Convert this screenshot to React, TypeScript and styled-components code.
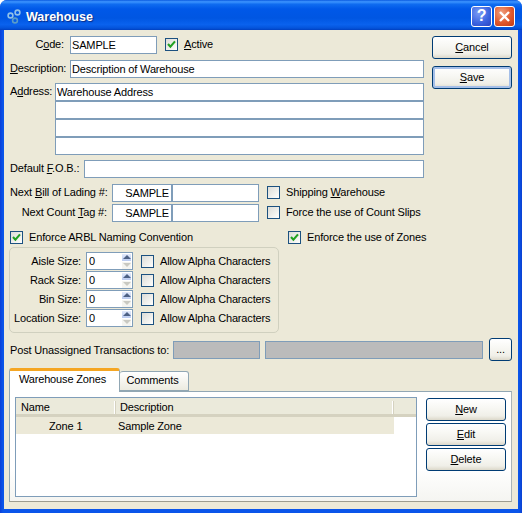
import React from "react";
import styled, { createGlobalStyle } from "styled-components";

const Global = createGlobalStyle`
  html, body { margin: 0; padding: 0; background: #fff; }
  body { font-family: "Liberation Sans", Arial, sans-serif; font-size: 11px; letter-spacing: -0.15px; color: #000; }
  * { box-sizing: border-box; }
  input, button { letter-spacing: inherit; }
`;

const Win = styled.div`
  width: 522px; height: 513px; display: flex; flex-direction: column;
  overflow: hidden; border-radius: 7px 7px 0 0;
  background: linear-gradient(90deg, #0a3fd8 0, #0a55ea 3px, #0a55ea 519px, #0a3fd0 100%);
`;
const TitleBar = styled.div`
  height: 30px; flex: none; display: flex; align-items: center; padding: 0 7px 0 7px;
  background: linear-gradient(180deg, #0a5ae0 0%, #3d95ff 6%, #0f6cf0 14%, #0058e8 30%, #0056e2 60%, #0a62ee 82%, #0453da 94%, #003fc0 100%);
`;
const TitleText = styled.span`
  font-weight: bold; font-size: 12.5px; letter-spacing: 0; color: #fff; margin-left: 5px; margin-top: 3px;
  text-shadow: 1px 1px 1px #0a2a80;
`;
const TitleIcon = styled.svg` width: 14px; height: 15px; flex: none; margin-top: 2px; `;
const TitleSpacer = styled.div` flex: 1; `;
const CapBtn = styled.div<{ $kind: "help" | "close" }>`
  width: 21px; height: 21px; border: 1px solid #fff; border-radius: 3px; margin-left: 2px; margin-top: 2px;
  display: flex; align-items: center; justify-content: center;
  color: #fff; font-weight: bold; font-size: 16px;
  background: ${p => p.$kind === "help"
    ? "radial-gradient(circle at 35% 30%, #7b9cf5 0%, #3a62df 60%, #2a44c0 100%)"
    : "radial-gradient(circle at 35% 30%, #f0a080 0%, #e0582c 55%, #c23a14 100%)"};
`;
const Body = styled.div`
  flex: 1; margin: 0 4px 4px; background: #ece9d8; padding-top: 6px; display: flex; flex-direction: column;
`;
const Top = styled.div` display: flex; `;
const FormCol = styled.div` width: 420px; display: flex; flex-direction: column; padding-left: 6px; `;
const SideCol = styled.div` margin-left: 8px; width: 80px; display: flex; flex-direction: column; gap: 7px; `;
const Row = styled.div<{ $mt?: number }>`
  display: flex; align-items: flex-start; margin-top: ${p => p.$mt ?? 0}px;
`;
const Label = styled.label<{ $w: number; $gap?: number }>`
  width: ${p => p.$w}px; flex: none; text-align: right;
  margin-right: ${p => p.$gap ?? 6}px; line-height: 16px; white-space: nowrap;
`;
const Field = styled.input<{ $w?: number; $right?: boolean; $gray?: boolean; $ml?: number }>`
  display: block; height: 18px; border: 1px solid #7f9db9; border-radius: 0; outline: none; padding: 0 2px 1px 1px;
  width: ${p => p.$w ? `${p.$w}px` : "100%"}; flex: ${p => p.$w ? "none" : "1 1 auto"};
  min-width: 0; margin: 0 0 0 ${p => p.$ml ?? 0}px;
  font: inherit; color: #000; text-align: ${p => p.$right ? "right" : "left"};
  background: ${p => p.$gray ? "#bbb" : "#fff"};
`;
const AddressStack = styled.div`
  flex: 1; display: flex; flex-direction: column;
  & > input { flex: none; }
`;
const Box = styled.span`
  width: 13px; height: 13px; flex: none; border: 1px solid #1c5180; display: block;
  background: linear-gradient(135deg, #dcdcd7 0%, #f4f4f1 70%, #fff 100%);
`;
const CheckWrap = styled.label<{ $ml?: number; $mt?: number }>`
  display: inline-flex; align-items: center; gap: 6px; white-space: nowrap; line-height: 13px;
  margin-left: ${p => p.$ml ?? 0}px; margin-top: ${p => p.$mt ?? 0}px;
`;
const Check = ({ on, children, ml, mt }: { on?: boolean; children: React.ReactNode; ml?: number; mt?: number }) => (
  <CheckWrap $ml={ml} $mt={mt}>
    <Box>
      {on && (
        <svg width="11" height="11" viewBox="0 0 11 11" style={{ display: "block" }}>
          <path d="M2 5 L4.4 7.6 L9 2.4" fill="none" stroke="#21a121" strokeWidth="2.1" />
        </svg>
      )}
    </Box>
    <span>{children}</span>
  </CheckWrap>
);
const Btn = styled.button<{ $default?: boolean; $w?: number }>`
  width: ${p => p.$w ?? 80}px; height: 23px; padding: 0 0 1px; border: 1px solid #003c74; border-radius: 3px;
  font: inherit; color: #000; flex: none;
  background: linear-gradient(180deg, #fff 0%, #f8f8f4 40%, #f0efe8 80%, #dcd8ca 100%);
  box-shadow: ${p => p.$default ? "inset 0 0 0 2px #a5bfe8" : "none"};
`;
const EnforceRow = styled.div`
  display: grid; grid-template-columns: 278px auto; padding-left: 6px; margin-top: 9px; height: 13px;
`;
const Group = styled.div`
  width: 270px; margin: 3px 0 0 5px; padding: 4px 0 5px; border: 1px solid #d0d0bf; border-radius: 5px;
  display: flex; flex-direction: column; gap: 1px;
`;
const SpinRow = styled.div` display: flex; align-items: center; height: 18px; `;
const SpinLabel = styled.span` width: 71px; text-align: right; margin-right: 5px; flex: none; white-space: nowrap; `;
const Spin = styled.div`
  width: 47px; height: 18px; border: 1px solid #7f9db9; background: #fff; display: flex; align-items: center; padding: 0 1px 0 2px; flex: none; margin-right: 8px;
`;
const SpinValue = styled.span` flex: 1; `;
const SpinBtns = styled.div` width: 9px; display: flex; flex-direction: column; gap: 1px; `;
const SpinUp = styled.div`
  height: 7px; background: linear-gradient(180deg, #e2eafb, #b9caf0); display: flex; align-items: center; justify-content: center;
  &::after { content: ""; border: 4px solid transparent; border-top: 0; border-bottom: 4px solid #4d6185; }
`;
const SpinDown = styled.div`
  height: 7px; background: #f4f4f0; display: flex; align-items: center; justify-content: center;
  &::after { content: ""; border: 4px solid transparent; border-bottom: 0; border-top: 4px solid #c9c9c2; }
`;
const PostRow = styled.div` display: flex; align-items: center; height: 23px; margin-top: 5px; padding-left: 6px; `;
const PostLabel = styled.span` width: 163px; flex: none; white-space: nowrap; `;
const MoreBtn = styled(Btn)` width: 23px; margin-left: 6px; `;
const Tabs = styled.div` display: flex; align-items: flex-end; margin: 7px 0 0 5px; height: 23px; `;
const Tab = styled.div<{ $active?: boolean }>`
  display: flex; align-items: center; justify-content: center; border: 1px solid #91a7b4; border-radius: 3px 3px 0 0;
  ${p => p.$active
    ? "width: 111px; height: 24px; margin-bottom: -1px; background: #fff; border-bottom: 0; border-top: 3px solid #f5a623; position: relative; z-index: 1; padding: 0 4px 5px 0;"
    : "width: 69px; height: 20px; border-left: 0; padding: 0 3px 2px 0; background: linear-gradient(180deg, #fff, #ecebe0);"}
`;
const Pane = styled.div`
  width: 503px; height: 111px; margin-left: 5px; border: 1px solid #91a7b4; border-right-color: #a9b4b8; border-bottom-color: #9c9c90;
  background: linear-gradient(180deg, #fff 0%, #fff 70%, #f5f5f1 100%);
  padding: 5px 5px 4px; display: flex;
`;
const List = styled.div` width: 402px; height: 100px; border: 1px solid #7f9db9; background: #fff; display: flex; flex-direction: column; `;
const ListHead = styled.div`
  height: 19px; flex: none; display: flex; align-items: center; padding-top: 3px; background: #ebeadb; border-bottom: 3px solid #d5d2c0;
`;
const HeadCell = styled.div<{ $w: number }>`
  width: ${p => p.$w}px; flex: none; padding-left: 5px; height: 13px; line-height: 13px;
  border-right: 1px solid #fff; box-shadow: 1px 0 0 #d5d2c0;
`;
const ListRow = styled.div` width: 378px; height: 17px; display: flex; align-items: center; background: #ece9d8; `;
const Cell = styled.div<{ $w?: number; $pl: number }>`
  width: ${p => p.$w ? `${p.$w}px` : "auto"}; flex: ${p => p.$w ? "none" : "1"}; padding-left: ${p => p.$pl}px;
`;
const PaneBtns = styled.div` margin: 0 0 0 9px; padding-top: 1px; display: flex; flex-direction: column; gap: 2px; `;

const spins = ["Aisle Size:", "Rack Size:", "Bin Size:", "Location Size:"];

export default function App() {
  return (
    <Win>
      <Global />
      <TitleBar>
        <TitleIcon viewBox="0 0 14 15">
          <g fill="none" stroke="#8fc0e8" strokeWidth="1.6">
            <circle cx="3.5" cy="6.5" r="2.4" />
            <circle cx="10.5" cy="3.5" r="2.4" />
            <circle cx="8" cy="11.5" r="2.4" stroke="#5a9cc8" />
          </g>
        </TitleIcon>
        <TitleText>Warehouse</TitleText>
        <TitleSpacer />
        <CapBtn $kind="help">?</CapBtn>
        <CapBtn $kind="close">
          <svg width="13" height="13" viewBox="0 0 13 13"><path d="M2 2 L11 11 M11 2 L2 11" stroke="#fff" strokeWidth="2.4" /></svg>
        </CapBtn>
      </TitleBar>
      <Body>
        <Top>
          <FormCol>
            <Row>
              <Label $w={54}>C<u>o</u>de:</Label>
              <Field $w={87} defaultValue="SAMPLE" readOnly />
              <Check on ml={8} mt={2}><u>A</u>ctive</Check>
            </Row>
            <Row $mt={6}>
              <Label $w={54}><u>D</u>escription:</Label>
              <Field defaultValue="Description of Warehouse" readOnly />
            </Row>
            <Row $mt={5}>
              <Label $w={39}>A<u>d</u>dress:</Label>
              <AddressStack>
                <Field defaultValue="Warehouse Address" readOnly />
                <Field readOnly />
                <Field readOnly />
                <Field readOnly />
              </AddressStack>
            </Row>
            <Row $mt={5}>
              <Label $w={69} $gap={5}>Default <u>F</u>.O.B.:</Label>
              <Field readOnly />
            </Row>
            <Row $mt={6}>
              <Label $w={97} $gap={5}>Next <u>B</u>ill of Lading #:</Label>
              <Field $w={60} $right defaultValue="SAMPLE" readOnly />
              <Field $w={87} readOnly />
              <Check ml={8} mt={2}>Shipping <u>W</u>arehouse</Check>
            </Row>
            <Row $mt={2}>
              <Label $w={97} $gap={5}>Next Count <u>T</u>ag #:</Label>
              <Field $w={60} $right defaultValue="SAMPLE" readOnly />
              <Field $w={87} readOnly />
              <Check ml={8} mt={2}>Force the use of Count Slips</Check>
            </Row>
          </FormCol>
          <SideCol>
            <Btn><u>C</u>ancel</Btn>
            <Btn $default><u>S</u>ave</Btn>
          </SideCol>
        </Top>
        <EnforceRow>
          <Check on>Enforce ARBL Naming Convention</Check>
          <Check on>Enforce the use of Zones</Check>
        </EnforceRow>
        <Group>
          {spins.map(s => (
            <SpinRow key={s}>
              <SpinLabel>{s}</SpinLabel>
              <Spin>
                <SpinValue>0</SpinValue>
                <SpinBtns><SpinUp /><SpinDown /></SpinBtns>
              </Spin>
              <Check>Allow Alpha Characters</Check>
            </SpinRow>
          ))}
        </Group>
        <PostRow>
          <PostLabel>Post Unassigned Transactions to:</PostLabel>
          <Field $w={87} $gray readOnly />
          <Field $w={218} $ml={5} $gray readOnly />
          <MoreBtn>...</MoreBtn>
        </PostRow>
        <Tabs>
          <Tab $active>Warehouse Zones</Tab>
          <Tab>Comments</Tab>
        </Tabs>
        <Pane>
          <List>
            <ListHead>
              <HeadCell $w={99}>Name</HeadCell>
              <HeadCell $w={278}>Description</HeadCell>
            </ListHead>
            <ListRow>
              <Cell $w={100} $pl={33}>Zone 1</Cell>
              <Cell $pl={2}>Sample Zone</Cell>
            </ListRow>
          </List>
          <PaneBtns>
            <Btn><u>N</u>ew</Btn>
            <Btn><u>E</u>dit</Btn>
            <Btn><u>D</u>elete</Btn>
          </PaneBtns>
        </Pane>
      </Body>
    </Win>
  );
}
